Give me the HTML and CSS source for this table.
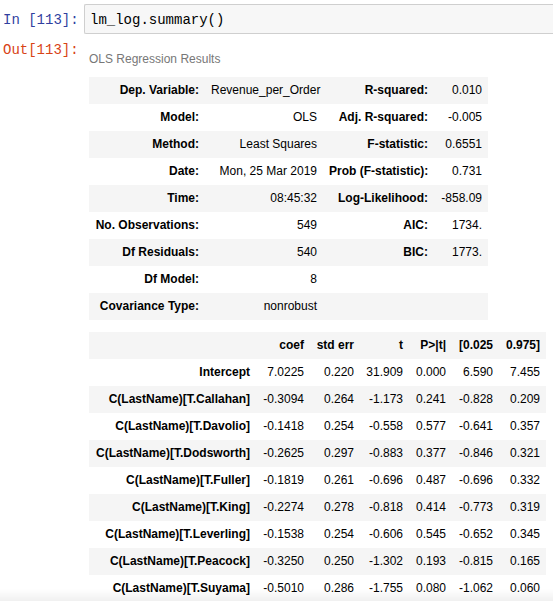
FILE: index.html
```html
<!DOCTYPE html>
<html>
<head>
<meta charset="utf-8">
<link rel="stylesheet" href="styles.css">
</head>
<body>
<div class="notebook">
  <div class="cell-row input-row">
    <div class="prompt in-prompt">In&nbsp;[113]:</div>
    <div class="input-area">lm_log.summary()</div>
  </div>
  <div class="cell-row output-row">
    <div class="prompt out-prompt">Out[113]:</div>
    <div class="output-area">
      <div class="caption">OLS Regression Results</div>
      <table class="simpletable t1">
        <colgroup>
          <col class="c1a"><col class="c1b"><col class="c1c"><col class="c1d">
        </colgroup>
        <tr><th>Dep. Variable:</th><td>Revenue_per_Order</td><th>R-squared:</th><td>0.010</td></tr>
        <tr><th>Model:</th><td>OLS</td><th>Adj. R-squared:</th><td>-0.005</td></tr>
        <tr><th>Method:</th><td>Least Squares</td><th>F-statistic:</th><td>0.6551</td></tr>
        <tr><th>Date:</th><td>Mon, 25 Mar 2019</td><th>Prob (F-statistic):</th><td>0.731</td></tr>
        <tr><th>Time:</th><td>08:45:32</td><th>Log-Likelihood:</th><td>-858.09</td></tr>
        <tr><th>No. Observations:</th><td>549</td><th>AIC:</th><td>1734.</td></tr>
        <tr><th>Df Residuals:</th><td>540</td><th>BIC:</th><td>1773.</td></tr>
        <tr><th>Df Model:</th><td>8</td><th></th><td></td></tr>
        <tr><th>Covariance Type:</th><td>nonrobust</td><th></th><td></td></tr>
      </table>
      <table class="simpletable t2">
        <colgroup>
          <col class="c2a"><col class="c2b"><col class="c2c"><col class="c2d"><col class="c2e"><col class="c2f"><col class="c2g">
        </colgroup>
        <tr><th></th><th>coef</th><th>std err</th><th>t</th><th>P&gt;|t|</th><th>[0.025</th><th>0.975]</th></tr>
        <tr><th>Intercept</th><td>7.0225</td><td>0.220</td><td>31.909</td><td>0.000</td><td>6.590</td><td>7.455</td></tr>
        <tr><th>C(LastName)[T.Callahan]</th><td>-0.3094</td><td>0.264</td><td>-1.173</td><td>0.241</td><td>-0.828</td><td>0.209</td></tr>
        <tr><th>C(LastName)[T.Davolio]</th><td>-0.1418</td><td>0.254</td><td>-0.558</td><td>0.577</td><td>-0.641</td><td>0.357</td></tr>
        <tr><th>C(LastName)[T.Dodsworth]</th><td>-0.2625</td><td>0.297</td><td>-0.883</td><td>0.377</td><td>-0.846</td><td>0.321</td></tr>
        <tr><th>C(LastName)[T.Fuller]</th><td>-0.1819</td><td>0.261</td><td>-0.696</td><td>0.487</td><td>-0.696</td><td>0.332</td></tr>
        <tr><th>C(LastName)[T.King]</th><td>-0.2274</td><td>0.278</td><td>-0.818</td><td>0.414</td><td>-0.773</td><td>0.319</td></tr>
        <tr><th>C(LastName)[T.Leverling]</th><td>-0.1538</td><td>0.254</td><td>-0.606</td><td>0.545</td><td>-0.652</td><td>0.345</td></tr>
        <tr><th>C(LastName)[T.Peacock]</th><td>-0.3250</td><td>0.250</td><td>-1.302</td><td>0.193</td><td>-0.815</td><td>0.165</td></tr>
        <tr><th>C(LastName)[T.Suyama]</th><td>-0.5010</td><td>0.286</td><td>-1.755</td><td>0.080</td><td>-1.062</td><td>0.060</td></tr>
      </table>
    </div>
  </div>
</div>
<div class="bottom-shade"></div>
</body>
</html>
```

FILE: styles.css
```css
html, body {
  margin: 0;
  padding: 0;
  background: #ffffff;
  overflow: hidden;
}

.notebook {
  width: 100%;
}

.cell-row {
  display: flex;
  align-items: flex-start;
}

.input-row {
  margin-top: 4px;
}

.prompt {
  width: 81px;
  padding-left: 3px;
  flex: none;
  font-family: "Liberation Mono", monospace;
  font-size: 14px;
  white-space: nowrap;
}

.in-prompt {
  color: #303f9f;
  line-height: 30px;
  padding-top: 1px;
}

.input-area {
  flex: 1;
  box-sizing: border-box;
  height: 30px;
  line-height: 28px;
  padding-top: 1px;
  padding-left: 5px;
  border: 1px solid #cfcfcf;
  border-right: none;
  border-radius: 2px 0 0 2px;
  background: #f7f7f7;
  font-family: "Liberation Mono", monospace;
  font-size: 14px;
  color: #000000;
}

.output-row {
  margin-top: 6px;
}

.out-prompt {
  color: #d84315;
  line-height: 18px;
}

.output-area {
  padding-left: 5px;
}

.caption {
  margin-top: 10px;
  font-family: "Liberation Sans", Arial, sans-serif;
  font-size: 12px;
  line-height: 16px;
  color: #777777;
}

.simpletable {
  border-collapse: collapse;
  border-spacing: 0;
  table-layout: fixed;
  font-family: "Liberation Sans", Arial, sans-serif;
  font-size: 12px;
  color: #000000;
}

.simpletable th,
.simpletable td {
  padding: 6px 6px;
  line-height: 15px;
  text-align: right;
  vertical-align: middle;
  white-space: nowrap;
  overflow: hidden;
}

.simpletable th {
  font-weight: bold;
}

.simpletable td {
  font-weight: normal;
}

.simpletable tr:nth-child(odd) {
  background: #f5f5f5;
}

.t1 {
  margin-top: 10px;
  width: 399px;
}

.c1a { width: 116px; }
.c1b { width: 118px; }
.c1c { width: 111px; }
.c1d { width: 54px; }

.t2 {
  margin-top: 12px;
  width: 457px;
}

.c2a { width: 167px; }
.c2b { width: 54px; }
.c2c { width: 50px; }
.c2d { width: 49px; }
.c2e { width: 43px; }
.c2f { width: 47px; }
.c2g { width: 47px; }

.bottom-shade {
  position: fixed;
  left: 0;
  right: 0;
  bottom: 0;
  height: 12px;
  background: linear-gradient(to bottom, rgba(0, 0, 0, 0), rgba(0, 0, 0, 0.06));
  pointer-events: none;
}
```
